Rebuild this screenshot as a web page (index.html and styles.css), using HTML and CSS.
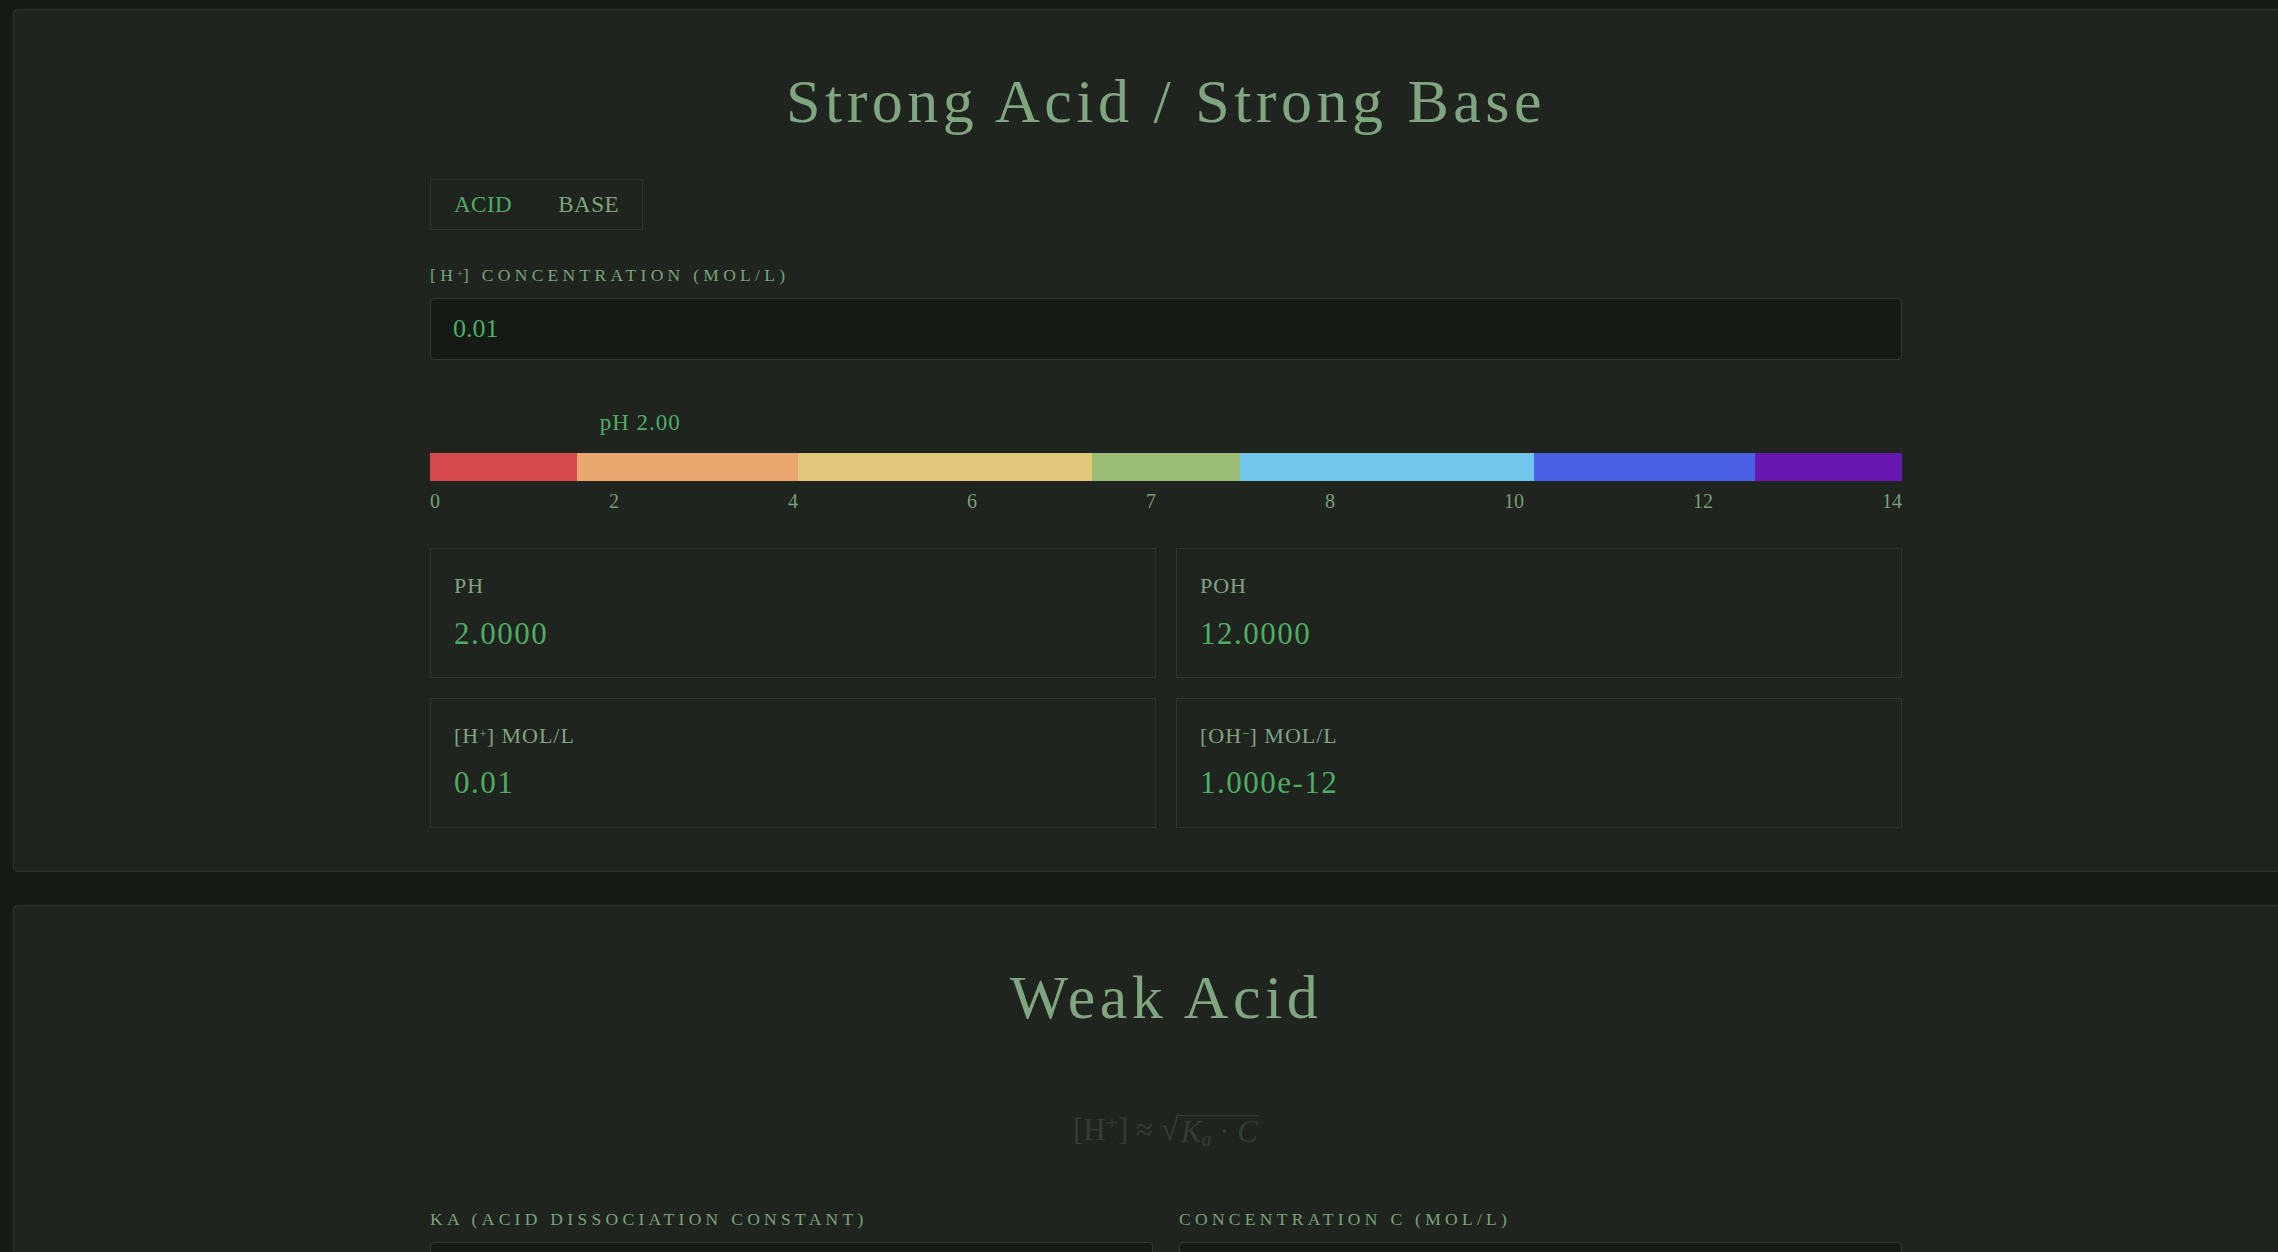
FILE: index.html
```html
<!DOCTYPE html>
<html lang="en">
<head>
<meta charset="utf-8">
<title>Acid / Base Calculator</title>
<link rel="stylesheet" href="styles.css">
</head>
<body>
<main class="page">
  <section class="card">
    <div class="inner">
      <h1 class="title">Strong Acid / Strong Base</h1>
      <div class="toggle">
        <button class="tab active">ACID</button>
        <button class="tab">BASE</button>
      </div>
      <label class="field-label">[H<sup>+</sup>] CONCENTRATION (MOL/L)</label>
      <input class="field-input" type="text" value="0.01">
      <div class="scale">
        <span class="marker" style="left:14.2857%">pH 2.00</span>
        <div class="bar">
          <span class="seg s1"></span>
          <span class="seg s2"></span>
          <span class="seg s3"></span>
          <span class="seg s4"></span>
          <span class="seg s5"></span>
          <span class="seg s6"></span>
          <span class="seg s7"></span>
        </div>
        <div class="ticks">
          <span>0</span><span>2</span><span>4</span><span>6</span><span>7</span><span>8</span><span>10</span><span>12</span><span>14</span>
        </div>
      </div>
      <div class="results">
        <div class="result">
          <div class="result-label">PH</div>
          <div class="result-value">2.0000</div>
        </div>
        <div class="result">
          <div class="result-label">POH</div>
          <div class="result-value">12.0000</div>
        </div>
        <div class="result">
          <div class="result-label">[H<sup>+</sup>] MOL/L</div>
          <div class="result-value">0.01</div>
        </div>
        <div class="result">
          <div class="result-label">[OH<sup>−</sup>] MOL/L</div>
          <div class="result-value">1.000e-12</div>
        </div>
      </div>
    </div>
  </section>

  <section class="card">
    <div class="inner">
      <h1 class="title">Weak Acid</h1>
      <div class="formula">
        <span>[H<sup>+</sup>]</span> ≈ <span class="sqrt"><span class="radical">√</span><span class="radicand"><i>K</i><sub>a</sub> · <i>C</i></span></span>
      </div>
      <div class="fields">
        <div class="field">
          <label class="field-label">KA (ACID DISSOCIATION CONSTANT)</label>
          <input class="field-input" type="text" value="1.8e-5">
        </div>
        <div class="field">
          <label class="field-label">CONCENTRATION C (MOL/L)</label>
          <input class="field-input" type="text" value="0.1">
        </div>
      </div>
    </div>
  </section>
</main>
</body>
</html>
```

FILE: styles.css
```css
html, body {
  margin: 0;
  padding: 0;
  overflow: hidden;
  background: #161a15;
}

body {
  font-family: "Liberation Serif", "Times New Roman", serif;
  color: #7fa67e;
}

.page {
  display: flex;
  flex-direction: column;
  align-items: flex-start;
  gap: 33px;
  padding: 9px 0 0 13px;
}

.card {
  flex-shrink: 0;
  width: 2306px;
  box-sizing: border-box;
  background: #1f241f;
  border: 1px solid #2f352e;
  border-radius: 4px;
  padding: 54px 0 43px;
}

.inner {
  width: 1472px;
  margin: 0 auto;
}

.title {
  margin: 0 0 41px;
  font-size: 62px;
  font-weight: 400;
  line-height: 1.2;
  letter-spacing: 4.5px;
  text-align: center;
  color: #7fa67e;
}

.toggle {
  display: flex;
  width: max-content;
  border: 1px solid #30362f;
  margin-bottom: 35px;
}

.tab {
  height: 49px;
  line-height: 49px;
  padding: 0 23px;
  margin: 0;
  background: none;
  border: none;
  font-family: inherit;
  font-size: 23px;
  letter-spacing: 0.5px;
  color: #7fa67e;
  cursor: pointer;
}

.tab.active {
  color: #4dae62;
}

.field-label {
  display: block;
  font-size: 17.5px;
  line-height: 1.2;
  letter-spacing: 4.3px;
  color: #79a479;
  margin-bottom: 12px;
}

sup {
  font-size: 0.6em;
  line-height: 0;
  vertical-align: 0.4em;
  letter-spacing: 0;
}

.field-input {
  display: block;
  width: 100%;
  box-sizing: border-box;
  height: 62px;
  padding: 0 22px;
  margin: 0;
  background: #161a15;
  border: 1px solid #343a32;
  border-radius: 4px;
  font-family: inherit;
  font-size: 26px;
  color: #4dae62;
  outline: none;
}

.scale {
  position: relative;
  margin-top: 49px;
  padding-top: 44px;
}

.marker {
  position: absolute;
  top: 0;
  transform: translateX(-50%);
  font-size: 23px;
  line-height: 1.2;
  letter-spacing: 1px;
  color: #4dae62;
  white-space: nowrap;
}

.bar {
  display: flex;
  height: 28px;
}

.seg { display: block; }
.s1 { flex: 2; background: #d64a4d; }
.s2 { flex: 3; background: #e9a76f; }
.s3 { flex: 4; background: #e2c679; }
.s4 { flex: 2; background: #9abd76; }
.s5 { flex: 4; background: #72c6ec; }
.s6 { flex: 3; background: #4a60e4; }
.s7 { flex: 2; background: #6818b0; }

.ticks {
  display: flex;
  justify-content: space-between;
  margin-top: 8px;
  font-size: 20px;
  line-height: 24px;
  color: #76a076;
}

.results {
  display: grid;
  grid-template-columns: 1fr 1fr;
  gap: 20px;
  margin-top: 35px;
}

.result {
  border: 1px solid #30362f;
  padding: 24px 23px 25px;
}

.result-label {
  font-size: 22px;
  line-height: 1.2;
  letter-spacing: 1px;
  color: #7fa67e;
  margin-bottom: 15px;
}

.result-value {
  font-size: 31px;
  line-height: 1.2;
  letter-spacing: 1.5px;
  color: #4dae62;
}

.formula {
  margin: 76px 0 60px;
  text-align: center;
  font-size: 31px;
  line-height: 1.2;
  color: #333e33;
}

.formula sup {
  font-size: 0.7em;
  vertical-align: 0.45em;
}

.sqrt {
  display: inline-flex;
  align-items: flex-end;
}

.radical {
  font-size: 1.05em;
}

.radicand {
  border-top: 1.5px solid #333e33;
  padding: 0 1px 0 2px;
  line-height: 1.05;
}

.radicand i {
  font-style: italic;
}

.radicand sub {
  font-size: 0.65em;
  font-style: italic;
  line-height: 0;
  vertical-align: -0.2em;
}

.fields {
  display: grid;
  grid-template-columns: 1fr 1fr;
  gap: 26px;
}

.field {
  min-width: 0;
}
```
